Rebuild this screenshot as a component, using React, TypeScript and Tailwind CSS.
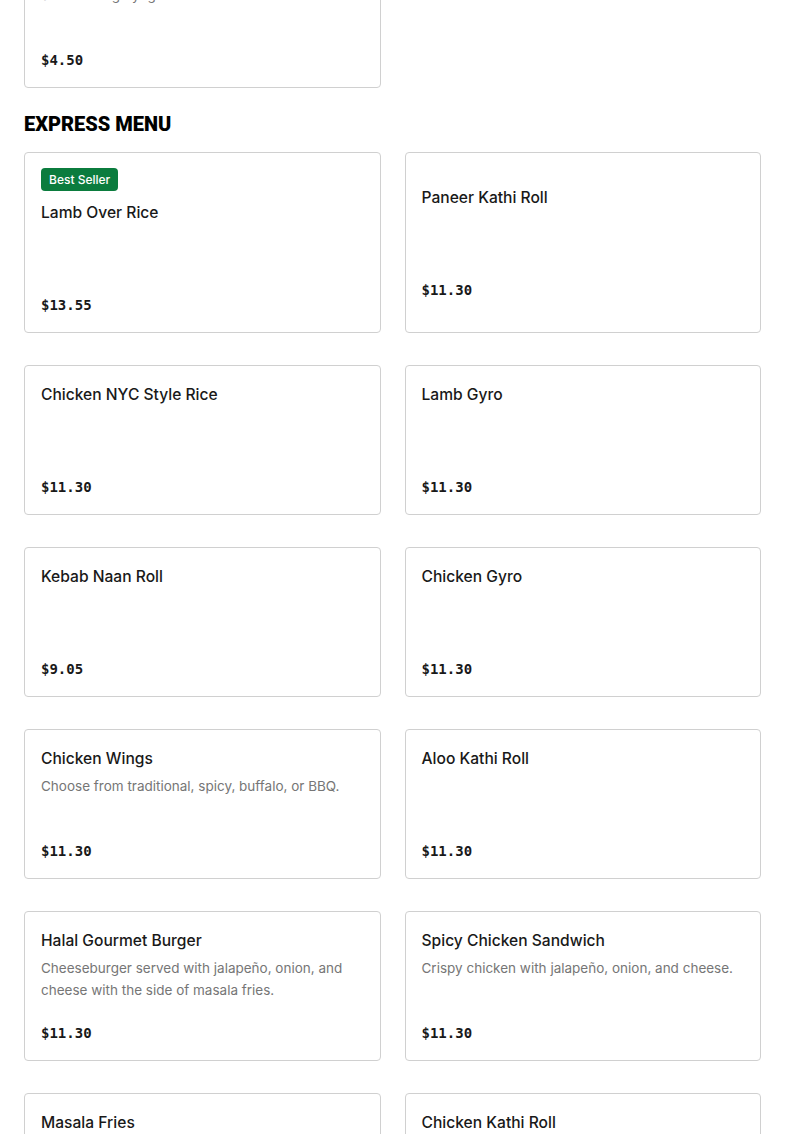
import React from "react";

type Item = { name: string; price: string; desc?: string; badge?: string };

const items: Item[] = [
  { name: "Lamb Over Rice", price: "$13.55", badge: "Best Seller" },
  { name: "Paneer Kathi Roll", price: "$11.30" },
  { name: "Chicken NYC Style Rice", price: "$11.30" },
  { name: "Lamb Gyro", price: "$11.30" },
  { name: "Kebab Naan Roll", price: "$9.05" },
  { name: "Chicken Gyro", price: "$11.30" },
  { name: "Chicken Wings", price: "$11.30", desc: "Choose from traditional, spicy, buffalo, or BBQ." },
  { name: "Aloo Kathi Roll", price: "$11.30" },
  {
    name: "Halal Gourmet Burger",
    price: "$11.30",
    desc: "Cheeseburger served with jalapeño, onion, and cheese with the side of masala fries.",
  },
  { name: "Spicy Chicken Sandwich", price: "$11.30", desc: "Crispy chicken with jalapeño, onion, and cheese." },
  { name: "Masala Fries", price: "$5.65" },
  { name: "Chicken Kathi Roll", price: "$11.30" },
];

function Card({ item }: { item: Item }) {
  return (
    <div className="flex flex-col justify-center rounded-[4px] border border-[#d0d0d0] bg-white px-4 pt-[17px] pb-[15px]">
      {item.badge && (
        <div className="-mt-[2px] mb-[10px] flex">
          <span className="flex h-[23px] items-center rounded-[4px] bg-[#0b7c3e] px-2 text-[12px] font-medium text-white">
            {item.badge}
          </span>
        </div>
      )}
      <div className="flex min-h-[116px] flex-col">
        <div className="text-[15.6px] font-medium leading-6 text-[#191919]">{item.name}</div>
        {item.desc && (
          <div className="mt-1 text-[13.5px] leading-[22px] text-[#767676]">{item.desc}</div>
        )}
        <div className="mt-auto pt-4 font-['DejaVu_Sans_Mono',monospace] text-[14px] font-bold leading-6 text-[#191919]">
          {item.price}
        </div>
      </div>
    </div>
  );
}

export default function App() {
  return (
    <div className="min-h-screen overflow-hidden bg-white px-6 font-['Inter',sans-serif]">
      <div className="mt-[-62px] grid grid-cols-2 gap-x-6">
        <Card item={{ name: "Mango Lassi", price: "$4.50", desc: "Sweet mango yogurt drink." }} />
      </div>
      <h2 className="mt-6 mb-4 font-['Roboto',sans-serif] text-[20px] font-black leading-6 text-black">
        EXPRESS MENU
      </h2>
      <div className="grid grid-cols-2 gap-x-6 gap-y-8 pb-8">
        {items.map((it) => (
          <Card key={it.name} item={it} />
        ))}
      </div>
    </div>
  );
}
